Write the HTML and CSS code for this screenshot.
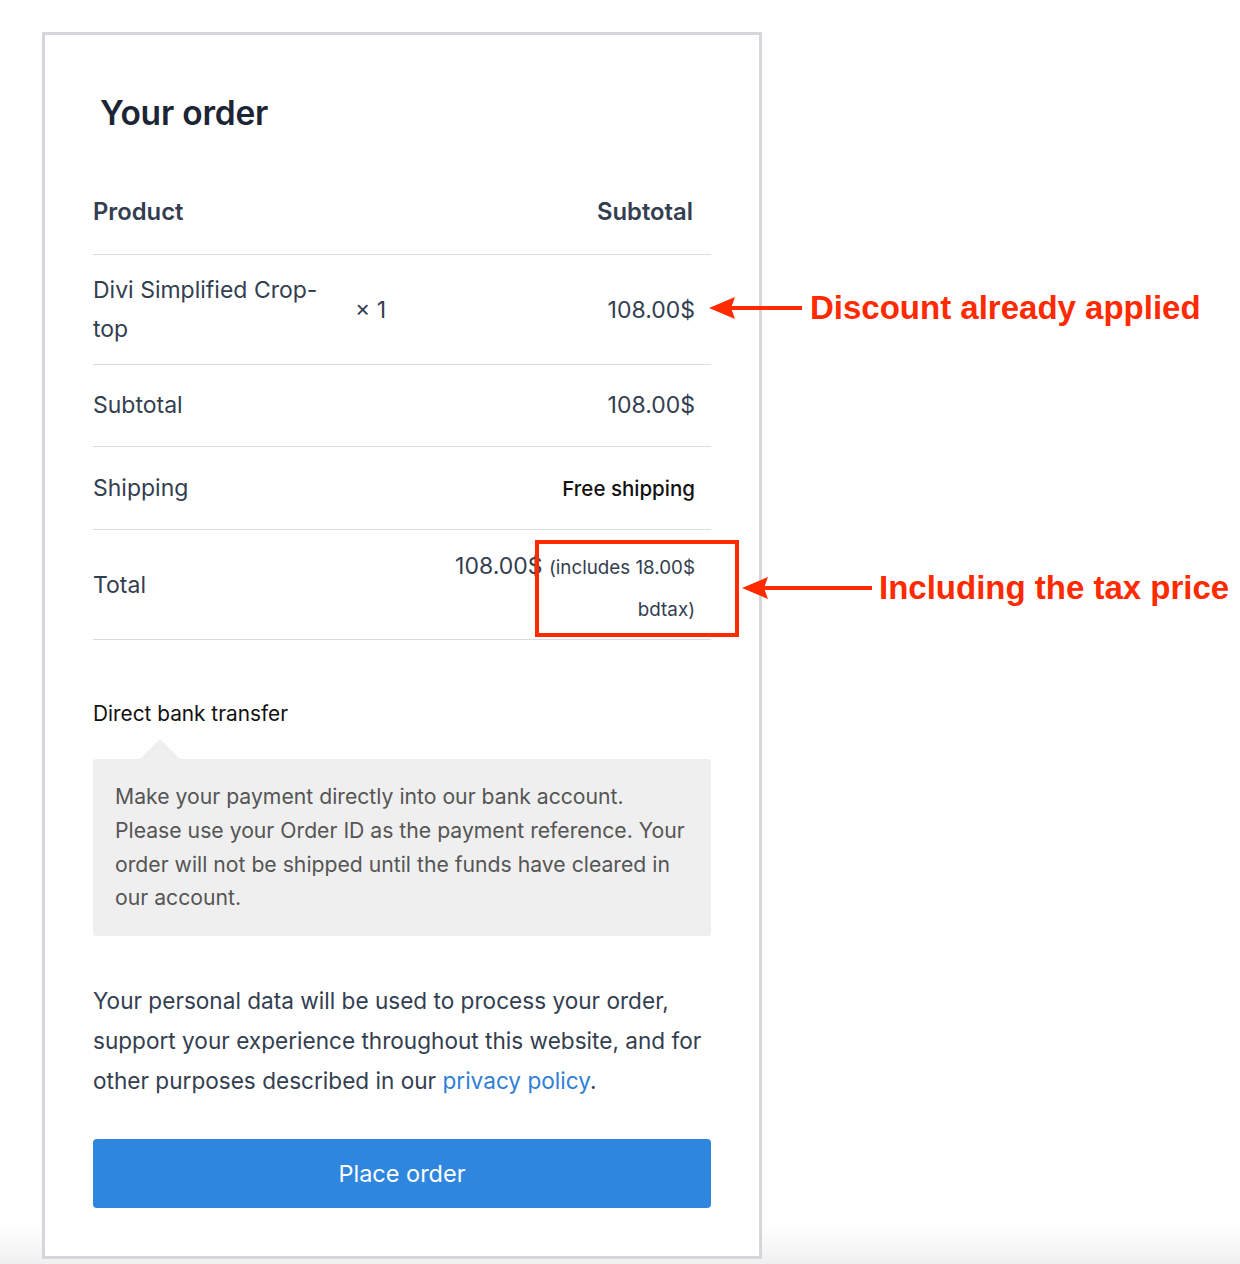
FILE: index.html
```html
<!DOCTYPE html>
<html lang="en">
<head>
<meta charset="utf-8">
<title>Your order</title>
<link rel="stylesheet" href="styles.css">
</head>
<body>
<div class="page">
  <div class="card">
    <h2 class="title">Your order</h2>
    <div class="row head">
      <div class="cell-name">Product</div>
      <div class="cell-right head-sub">Subtotal</div>
    </div>
    <div class="row item">
      <div class="cell-name prod">Divi Simplified Crop-top</div>
      <div class="qty">× 1</div>
      <div class="cell-right price">108.00$</div>
    </div>
    <div class="row simple">
      <div class="cell-name">Subtotal</div>
      <div class="cell-right price">108.00$</div>
    </div>
    <div class="row simple shipping">
      <div class="cell-name">Shipping</div>
      <div class="cell-right ship">Free shipping</div>
    </div>
    <div class="row total">
      <div class="cell-name">Total</div>
      <div class="cell-right total-val"><span class="amount">108.00$</span> <span class="tax">(includes 18.00$<br>bdtax)</span></div>
    </div>

    <div class="pay-title">Direct bank transfer</div>
    <div class="pay-box">Make your payment directly into our bank account. Please use your Order ID as the payment reference. Your order will not be shipped until the funds have cleared in our account.</div>

    <p class="privacy">Your personal data will be used to process your order, support your experience throughout this website, and for other purposes described in our <a href="#" class="link">privacy policy</a>.</p>

    <button class="place">Place order</button>
  </div>

  <div class="note note-1">
    <svg class="arrow" width="95" height="30" viewBox="0 0 95 30"><line x1="20" y1="15" x2="93" y2="15" stroke="#ff2a00" stroke-width="4"/><polygon points="0,15 26,4 22,15 26,26" fill="#ff2a00"/></svg>
    <span class="note-text">Discount already applied</span>
  </div>
  <div class="hl-box"></div>
  <div class="note note-2">
    <svg class="arrow" width="131" height="30" viewBox="0 0 131 30"><line x1="20" y1="15" x2="130" y2="15" stroke="#ff2a00" stroke-width="4"/><polygon points="0,15 26,4 22,15 26,26" fill="#ff2a00"/></svg>
    <span class="note-text">Including the tax price</span>
  </div>
  <div class="fade"></div>
</div>
</body>
</html>
```

FILE: styles.css
```css
* { box-sizing: border-box; }
html, body { margin: 0; padding: 0; background: #ffffff; }
body { font-family: Inter, "Noto Sans", sans-serif; color: #333e50; }

.page {
  position: relative;
  width: 1240px;
  height: 1264px;
  padding: 32px 0 0 42px;
  overflow: hidden;
}

.card {
  width: 720px;
  border: 3px solid #d6d6da;
  padding: 58px 48px 48px 48px;
  background: #fff;
  position: relative;
  z-index: 1;
}

.title {
  margin: 0 0 37px 7px;
  font-size: 33.5px;
  line-height: 40px;
  font-weight: 600;
  color: #1c2536;
  letter-spacing: -0.2px;
}

.row {
  display: flex;
  align-items: flex-start;
  border-bottom: 1px solid #dcdcdf;
  font-size: 23px;
  line-height: 39px;
}
.cell-name { flex: 0 0 auto; }
.cell-right { margin-left: auto; padding-right: 16px; text-align: right; }

.head { padding: 27px 0 27px; line-height: 30px; font-weight: 600; font-size: 23.8px; }
.head-sub { padding-right: 18px; }

.item { padding: 16px 0 15px; align-items: center; }
.prod { width: 250px; }
.qty { margin-left: 12px; }

.simple { padding: 21px 0 21px; }
.shipping { padding: 22px 0 21px; }

.ship { font-size: 20.5px; color: #111; font-weight: 500; }

.total { padding: 16px 0 9px; }
.total .cell-name { padding-top: 20px; }
.total-val { line-height: 40px; }
.amount { font-size: 23px; }
.tax { font-size: 18.8px; }

.pay-title {
  margin-top: 62px;
  font-size: 20.8px;
  line-height: 24px;
  color: #111;
  font-weight: 400;
}

.pay-box {
  position: relative;
  margin-top: 33px;
  background: #efefef;
  border-radius: 3px;
  padding: 21px 20px 21px 22px;
  font-size: 21.2px;
  line-height: 33.75px;
  color: #555;
}
.pay-box::before {
  content: "";
  position: absolute;
  left: 47px;
  top: -20px;
  border-left: 20px solid transparent;
  border-right: 20px solid transparent;
  border-bottom: 20px solid #efefef;
}

.privacy {
  margin: 45px 0 38px;
  font-size: 22.6px;
  line-height: 40px;
  color: #333e50;
}
.link { color: #2f7fd8; text-decoration: none; }

.place {
  display: block;
  width: 100%;
  height: 69px;
  border: 0;
  border-radius: 4px;
  background: #2e86de;
  color: #fff;
  font-family: Inter, "Noto Sans", sans-serif;
  font-size: 23.5px;
  font-weight: 400;
}

.note {
  position: absolute;
  display: flex;
  align-items: center;
  z-index: 3;
}
.note-1 { left: 709px; top: 289px; }
.note-2 { left: 742px; top: 569px; }
.arrow { display: block; flex: 0 0 auto; }
.note-text {
  margin-left: 6px;
  font-family: "Liberation Sans", Arial, sans-serif;
  font-weight: 700;
  font-size: 33px;
  color: #ff2a00;
  white-space: nowrap;
}

.hl-box {
  position: absolute;
  left: 535px;
  top: 540px;
  width: 204px;
  height: 97px;
  border: 4px solid #ff2a00;
  z-index: 3;
}

.fade {
  position: absolute;
  left: 0;
  right: 0;
  bottom: 0;
  height: 40px;
  background: linear-gradient(to bottom, rgba(240,240,240,0), rgba(236,236,236,0.8));
  z-index: 0;
}
```
